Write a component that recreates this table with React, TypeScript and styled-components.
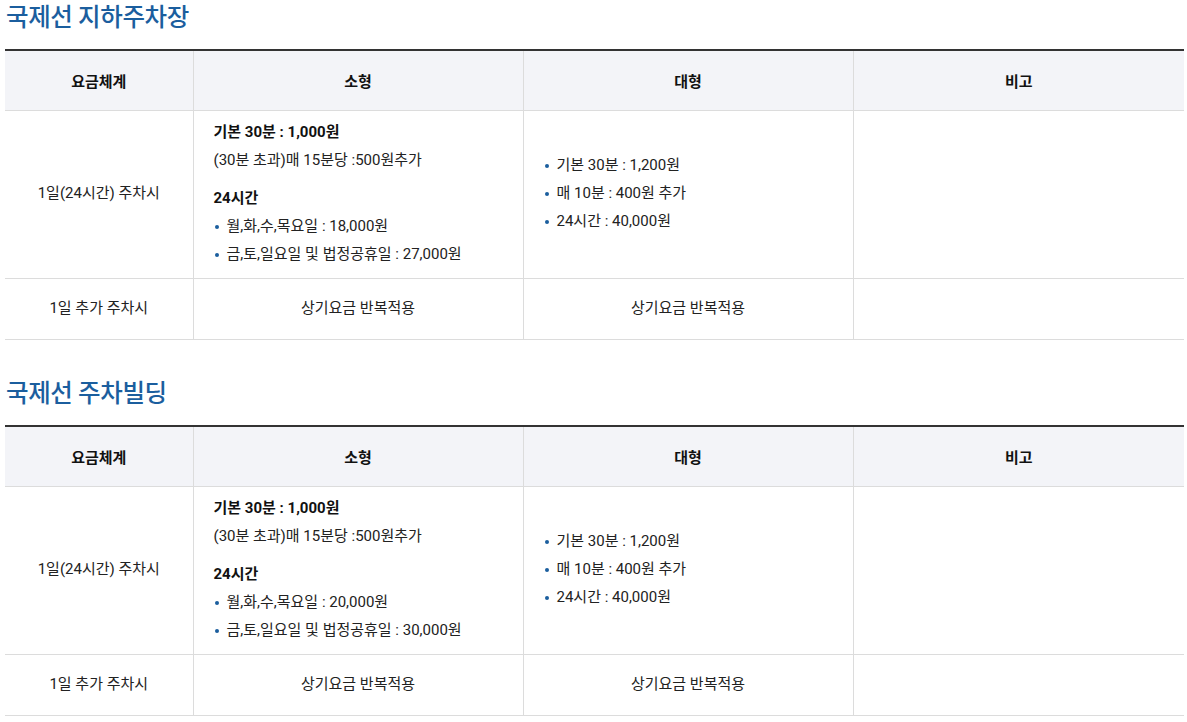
import React from "react";
import styled, { createGlobalStyle } from "styled-components";

const Global = createGlobalStyle`
  html, body { margin: 0; padding: 0; background: #fff; }
  body { font-family: Roboto, "Noto Sans CJK KR", sans-serif; color: #222; }
`;

const Page = styled.div`
  padding: 0 3px 0 5px;
  width: 1179px;
`;

const Title = styled.h2<{ $first?: boolean }>`
  margin: ${(p) => (p.$first ? "0" : "36px")} 0 13px 1px;
  font-size: 24.5px;
  line-height: 36px;
  font-weight: 500;
  color: #1b5e9e;
  letter-spacing: -0.4px;
`;

const Table = styled.table`
  width: 1179px;
  border-collapse: collapse;
  table-layout: fixed;
  border-top: 2px solid #333;
  font-size: 15px;
`;

const Th = styled.th`
  height: 59px;
  padding: 0;
  background: #f3f4f8;
  border-bottom: 1px solid #dcdcdc;
  border-left: 1px solid #dcdcdc;
  &:first-child { border-left: none; }
  font-weight: 700;
  color: #111;
  text-align: center;
  vertical-align: middle;
`;

const Td = styled.td<{ $align?: "left" | "center"; $short?: boolean }>`
  height: ${(p) => (p.$short ? "43px" : "auto")};
  padding: 7px 20px 10px 20px;
  border-bottom: 1px solid #dcdcdc;
  border-left: 1px solid #dcdcdc;
  &:first-child { border-left: none; }
  text-align: ${(p) => p.$align || "center"};
  vertical-align: middle;
  line-height: 28px;
  color: #222;
`;

const Strong = styled.div<{ $gap?: boolean }>`
  font-weight: 700;
  color: #111;
  margin-top: ${(p) => (p.$gap ? "10px" : "0")};
`;

const Line = styled.div``;

const List = styled.ul`
  list-style: none;
  margin: 0;
  padding: 0;
`;

const Item = styled.li`
  position: relative;
  padding-left: 13px;
  &::before {
    content: "";
    position: absolute;
    left: 1px;
    top: 13px;
    width: 4px;
    height: 4px;
    border-radius: 50%;
    background: #1b5e9e;
  }
`;

type Data = { title: string; weekday: string; weekend: string; first?: boolean };

const Section = ({ title, weekday, weekend, first }: Data) => (
  <>
    <Title $first={first}>{title}</Title>
    <Table>
      <colgroup>
        <col style={{ width: 188 }} />
        <col style={{ width: 330 }} />
        <col style={{ width: 330 }} />
        <col style={{ width: 331 }} />
      </colgroup>
      <thead>
        <tr>
          <Th>요금체계</Th>
          <Th>소형</Th>
          <Th>대형</Th>
          <Th>비고</Th>
        </tr>
      </thead>
      <tbody>
        <tr>
          <Td>1일(24시간) 주차시</Td>
          <Td $align="left">
            <Strong>기본 30분 : 1,000원</Strong>
            <Line>(30분 초과)매 15분당 :500원추가</Line>
            <Strong $gap>24시간</Strong>
            <List>
              <Item>월,화,수,목요일 : {weekday}</Item>
              <Item>금,토,일요일 및 법정공휴일 : {weekend}</Item>
            </List>
          </Td>
          <Td $align="left">
            <List>
              <Item>기본 30분 : 1,200원</Item>
              <Item>매 10분 : 400원 추가</Item>
              <Item>24시간 : 40,000원</Item>
            </List>
          </Td>
          <Td />
        </tr>
        <tr>
          <Td $short>1일 추가 주차시</Td>
          <Td $short>상기요금 반복적용</Td>
          <Td $short>상기요금 반복적용</Td>
          <Td $short />
        </tr>
      </tbody>
    </Table>
  </>
);

export default function App() {
  return (
    <Page>
      <Global />
      <Section first title="국제선 지하주차장" weekday="18,000원" weekend="27,000원" />
      <Section title="국제선 주차빌딩" weekday="20,000원" weekend="30,000원" />
    </Page>
  );
}
